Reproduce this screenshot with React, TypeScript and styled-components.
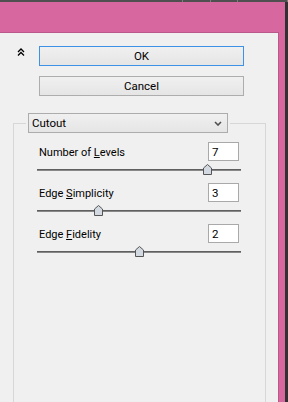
import styled, { createGlobalStyle } from 'styled-components';

const GlobalStyle = createGlobalStyle`
  html, body {
    margin: 0;
    padding: 0;
  }
  body {
    font-family: Roboto, "Liberation Sans", sans-serif;
    font-size: 11.5px;
    color: #000;
  }
`;

const pink = '#d6689f';
const pinkEdge = '#b9588a';

const Screen = styled.div`
  width: 288px;
  height: 402px;
  display: flex;
  flex-direction: column;
  overflow: hidden;
  background: ${pink};
`;

const TopStrip = styled.div`
  height: 2px;
  flex-shrink: 0;
  display: flex;
  background: #4f4f4f;
`;

const StripSegment = styled.div<{ $w?: number }>`
  width: ${(p) => (p.$w ? `${p.$w}px` : 'auto')};
  flex: ${(p) => (p.$w ? '0 0 auto' : '1')};
  box-sizing: border-box;
  border-right: 1px solid #7d7d7d;
`;

const Body = styled.div`
  flex: 1;
  display: flex;
  min-height: 0;
`;

const Frame = styled.div`
  flex: 1;
  display: flex;
  flex-direction: column;
  padding: 30px 6px 0 0;
`;

const RightEdge = styled.div`
  width: 3px;
  background: #2f3133;
`;

const Panel = styled.div`
  flex: 1;
  display: flex;
  flex-direction: column;
  background: #f0f0f0;
  border-top: 1px solid ${pinkEdge};
  border-right: 1px solid ${pinkEdge};
`;

const Header = styled.div`
  display: grid;
  grid-template-columns: 39px 205px;
  row-gap: 10px;
  padding-top: 13px;
`;

const Collapse = styled.div`
  padding: 2px 0 0 17px;
  line-height: 0;
`;

const Button = styled.button<{ $primary?: boolean }>`
  grid-column: 2;
  height: 20px;
  box-sizing: border-box;
  padding: 0;
  border: 1px solid ${(p) => (p.$primary ? '#3d92e6' : '#adadad')};
  background: linear-gradient(#f0f0f0, #e5e5e5);
  font-family: inherit;
  font-size: 11.5px;
  color: #000;
`;

const GroupBox = styled.fieldset`
  flex: 1;
  margin: 17px 0 0 13px;
  width: 253px;
  min-width: 0;
  box-sizing: border-box;
  padding: 0 0 0 12px;
  border: 1px solid #d7d7d7;
  border-bottom: 0;
`;

const Legend = styled.legend`
  padding: 0 2px;
  margin: 0;
`;

const Dropdown = styled.div`
  width: 200px;
  height: 20px;
  box-sizing: border-box;
  display: flex;
  align-items: center;
  justify-content: space-between;
  padding: 0 5px 0 3px;
  border: 1px solid #acacac;
  background: linear-gradient(#f0f0f0, #e5e5e5);
  font-size: 11.5px;
`;

const Rows = styled.div`
  width: 204px;
  margin: 9px 0 0 11px;
  display: flex;
  flex-direction: column;
`;

const Row = styled.div`
  display: flex;
  flex-direction: column;
`;

const RowTop = styled.div`
  display: flex;
  align-items: center;
  justify-content: space-between;
  padding: 0 2px 0 2px;
`;

const Label = styled.span`
  font-size: 11px;
  padding-top: 2px;
`;

const ValueBox = styled.input`
  width: 31px;
  height: 19px;
  box-sizing: border-box;
  border: 1px solid #a9a9a9;
  background: #fff;
  padding: 0 0 0 3px;
  font-family: Roboto, "Liberation Sans", sans-serif;
  font-size: 11.5px;
  color: #000;
  outline: none;
`;

const Slider = styled.div`
  position: relative;
  height: 22px;
`;

const Track = styled.div`
  margin-top: 8px;
  height: 2px;
  box-sizing: border-box;
  border-top: 1px solid #5f5f5f;
  border-bottom: 1px solid #888;
`;

const Thumb = styled.svg`
  position: absolute;
  top: 3px;
  width: 9px;
  height: 11px;
  margin-left: -4px;
`;

type Setting = {
  before: string;
  key: string;
  after: string;
  value: number;
  min: number;
  max: number;
};

const settings: Setting[] = [
  { before: 'Number of ', key: 'L', after: 'evels', value: 7, min: 2, max: 8 },
  { before: 'Edge ', key: 'S', after: 'implicity', value: 3, min: 0, max: 10 },
  { before: 'Edge ', key: 'F', after: 'idelity', value: 2, min: 1, max: 3 },
];

function SettingRow({ s }: { s: Setting }) {
  const pct = ((s.value - s.min) / (s.max - s.min)) * 100;
  return (
    <Row>
      <RowTop>
        <Label>
          {s.before}
          <u>{s.key}</u>
          {s.after}
        </Label>
        <ValueBox readOnly defaultValue={String(s.value)} />
      </RowTop>
      <Slider>
        <Track />
        <Thumb viewBox="0 0 9 11" style={{ left: `${pct}%` }}>
          <path d="M0.5 10.5 V4 L4.5 0.5 L8.5 4 V10.5 Z" fill="#d2d9e1" stroke="#555" />
        </Thumb>
      </Slider>
    </Row>
  );
}

export default function App() {
  return (
    <Screen>
      <GlobalStyle />
      <TopStrip>
        <StripSegment $w={183} />
        <StripSegment $w={28} />
        <StripSegment $w={27} />
        <StripSegment />
      </TopStrip>
      <Body>
        <Frame>
          <Panel>
            <Header>
              <Collapse>
                <svg width="8" height="8" viewBox="0 0 8 8">
                  <path d="M1 4 L4 1 L7 4 M1 7.5 L4 4.5 L7 7.5" stroke="#000" strokeWidth="1.3" fill="none" />
                </svg>
              </Collapse>
              <Button $primary>OK</Button>
              <Button>Cancel</Button>
            </Header>
            <GroupBox>
              <Legend>
                <Dropdown>
                  <span>Cutout</span>
                  <svg width="8" height="5" viewBox="0 0 8 5">
                    <path d="M1 1 L4 4 L7 1" stroke="#505050" strokeWidth="1.6" fill="none" />
                  </svg>
                </Dropdown>
              </Legend>
              <Rows>
                {settings.map((s) => (
                  <SettingRow key={s.key} s={s} />
                ))}
              </Rows>
            </GroupBox>
          </Panel>
        </Frame>
        <RightEdge />
      </Body>
    </Screen>
  );
}
